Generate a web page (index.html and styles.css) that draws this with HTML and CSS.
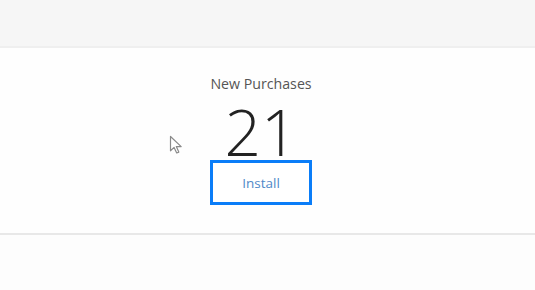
FILE: index.html
```html
<!DOCTYPE html>
<html>
<head>
<meta charset="utf-8">
<link rel="stylesheet" href="styles.css">
</head>
<body>
<div class="page">
  <header class="topbar"></header>
  <section class="panel">
    <div class="stat">
      <div class="stat-label">New Purchases</div>
      <div class="stat-value">21</div>
      <button class="install-btn">Install</button>
    </div>
    <svg class="cursor" width="15" height="20" viewBox="0 0 15 20">
      <path d="M1.5 1.5 L1.5 15.8 L5.1 12.4 L7.7 18 L9.8 17.1 L7.3 11.6 L12.2 11.6 Z" fill="#fff" stroke="#8a8a8a" stroke-width="1.2" stroke-linejoin="round"/>
    </svg>
  </section>
  <footer class="bottom"></footer>
</div>
</body>
</html>
```
FILE: styles.css
```css
html, body {
  margin: 0;
  padding: 0;
  background: #fdfdfd;
  font-family: "Open Sans", "Noto Sans", sans-serif;
}
.page {
  width: 535px;
  height: 290px;
  display: flex;
  flex-direction: column;
}
.topbar {
  height: 46px;
  background: #f6f6f6;
  border-bottom: 2px solid #efefef;
  flex: none;
}
.panel {
  position: relative;
  height: 185px;
  background: #fefefe;
  border-bottom: 2px solid #e8e8e8;
  display: flex;
  justify-content: center;
  flex: none;
}
.stat {
  display: flex;
  flex-direction: column;
  align-items: center;
  margin-left: -13px;
  padding-top: 26px;
}
.stat-label {
  font-size: 14.2px;
  color: #555;
  line-height: 20px;
}
.stat-value {
  font-size: 64px;
  font-weight: 300;
  color: #222;
  line-height: 57px;
  margin-top: 9px;
}
.install-btn {
  width: 102px;
  height: 45px;
  border: 3px solid #0a7df8;
  background: #fff;
  color: #5089c8;
  font-family: "Open Sans", "Noto Sans", sans-serif;
  font-size: 13.5px;
  padding: 0;
  margin-top: 0;
}
.cursor {
  position: absolute;
  left: 169px;
  top: 87px;
}
.bottom {
  flex: 1;
  background: #fdfdfd;
}
```
